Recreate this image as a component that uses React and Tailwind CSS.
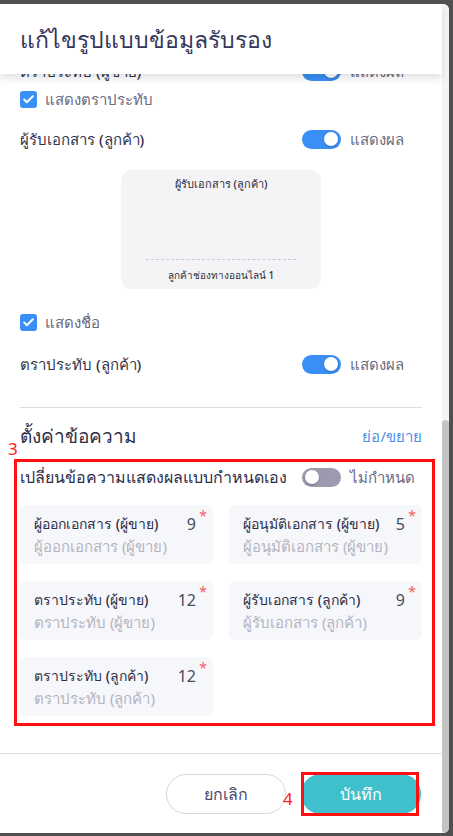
import { Check } from 'lucide-react';

const fontStack = { fontFamily: '"Noto Sans", "DejaVu Sans", sans-serif' };

function Toggle({ on = true, label }) {
  return (
    <div className="flex w-[120px] items-center gap-[9px]">
      <div
        className={`flex h-[19px] w-[39px] items-center rounded-full px-[3px] ${
          on ? 'justify-end bg-[#3a8ff7]' : 'justify-start bg-[#9b9aae]'
        }`}
      >
        <div className="h-[14px] w-[14px] rounded-full bg-white shadow-[0_1px_2px_rgba(0,0,0,0.25)]" />
      </div>
      <span className="text-[15px] leading-none text-[#6a6a82]">{label}</span>
    </div>
  );
}

function CheckRow({ label }) {
  return (
    <div className="flex h-[24px] items-center gap-[8px]">
      <div className="flex h-[17px] w-[17px] items-center justify-center rounded-[3px] bg-[#3a8ff7]">
        <Check className="h-[13px] w-[13px] text-white" strokeWidth={3.5} />
      </div>
      <span className="text-[15px] leading-none text-[#6a6a82]">{label}</span>
    </div>
  );
}

function SettingRow({ label, toggleLabel = 'แสดงผล', on = true, className = '' }) {
  return (
    <div className={`flex h-[24px] items-center justify-between ${className}`}>
      <span className="text-[15px] font-medium leading-none text-[#33334a]">{label}</span>
      <Toggle on={on} label={toggleLabel} />
    </div>
  );
}

function TextCard({ label, count, placeholder }) {
  return (
    <div className="relative h-[59px] rounded-[6px] bg-[#f6f7fb] pl-[14px] pr-[17px] pt-[8px]">
      <div className="flex items-center justify-between">
        <span className="text-[14px] font-medium leading-[22px] text-[#2e2e44]">{label}</span>
        <span className="text-[16px] leading-[22px] text-[#4a4a5e]">{count}</span>
      </div>
      <span className="absolute right-[6px] top-[4px] text-[14px] leading-none text-[#f2605a]">*</span>
      <div className="text-[15px] leading-[22px] text-[#b4b4c0]">{placeholder}</div>
    </div>
  );
}

export default function App() {
  return (
    <div className="h-[836px] w-[453px] overflow-hidden bg-[#505050] pt-[4px]" style={fontStack}>
      <div className="flex h-[829px] w-[449px] overflow-hidden rounded-r-[6px] bg-white">
        <div className="flex w-[442px] flex-col">
          {/* header */}
          <div className="relative z-10 flex h-[70px] shrink-0 items-center bg-white px-[20px] shadow-[0_4px_8px_rgba(0,0,0,0.12)]">
            <h1 className="text-[23px] font-medium leading-none text-[#36365a]">แก้ไขรูปแบบข้อมูลรับรอง</h1>
          </div>

          {/* body */}
          <div className="flex-1 overflow-hidden px-[20px]">
            <SettingRow label="ตราประทับ (ผู้ขาย)" className="-mt-[15px]" />
            <div className="mt-[4px]">
              <CheckRow label="แสดงตราประทับ" />
            </div>
            <SettingRow label="ผู้รับเอกสาร (ลูกค้า)" className="mt-[16px]" />

            <div className="mx-auto mt-[19px] flex h-[119px] w-[200px] flex-col items-center rounded-[10px] bg-[#f4f4f6] px-[25px] pt-[6px]">
              <span className="text-[11px] font-medium leading-[16px] text-[#2e2e3e]">ผู้รับเอกสาร (ลูกค้า)</span>
              <div className="mt-[67px] w-full border-t border-dashed border-[#c9c9d2]" />
              <span className="mt-[8px] text-[10px] font-medium leading-[14px] text-[#2e2e3e]">ลูกค้าช่องทางออนไลน์ 1</span>
            </div>

            <div className="mt-[21px]">
              <CheckRow label="แสดงชื่อ" />
            </div>
            <SettingRow label="ตราประทับ (ลูกค้า)" className="mt-[18px]" />

            <div className="mt-[31px] border-t border-[#dcdce4]" />

            <div className="mt-[14px] flex h-[28px] items-center justify-between">
              <span className="text-[19px] font-medium leading-none text-[#2e2e46]">ตั้งค่าข้อความ</span>
              <span className="text-[15px] leading-none text-[#4c8fe6]">ย่อ/ขยาย</span>
            </div>

            {/* highlighted block */}
            <div className="relative -ml-[6px] -mr-[13px] mt-[9px] border-[3px] border-[#ff1010] pb-[7px] pl-[3px] pr-[10px] pt-[3px]">
              <span className="absolute -left-[9px] -top-[22px] text-[17px] leading-none text-[#ff2020]">3</span>
              <div className="flex h-[24px] items-center justify-between">
                <span className="text-[16px] font-medium leading-none text-[#2e2e46]">เปลี่ยนข้อความแสดงผลแบบกำหนดเอง</span>
                <Toggle on={false} label="ไม่กำหนด" />
              </div>
              <div className="mt-[16px] grid grid-cols-2 gap-x-[16px] gap-y-[17px]">
                <TextCard label="ผู้ออกเอกสาร (ผู้ขาย)" count="9" placeholder="ผู้ออกเอกสาร (ผู้ขาย)" />
                <TextCard label="ผู้อนุมัติเอกสาร (ผู้ขาย)" count="5" placeholder="ผู้อนุมัติเอกสาร (ผู้ขาย)" />
                <TextCard label="ตราประทับ (ผู้ขาย)" count="12" placeholder="ตราประทับ (ผู้ขาย)" />
                <TextCard label="ผู้รับเอกสาร (ลูกค้า)" count="9" placeholder="ผู้รับเอกสาร (ลูกค้า)" />
                <TextCard label="ตราประทับ (ลูกค้า)" count="12" placeholder="ตราประทับ (ลูกค้า)" />
              </div>
            </div>
          </div>

          {/* footer */}
          <div className="flex shrink-0 justify-end gap-[15px] border-t border-[#dcdce4] pb-[19px] pl-[20px] pr-[21px] pt-[20px]">
            <button className="h-[40px] w-[120px] rounded-full border border-[#d6d6e0] bg-white text-[16px] text-[#4a4a6c]">
              ยกเลิก
            </button>
            <div className="relative">
              <span className="absolute -left-[18px] top-[16px] text-[17px] leading-none text-[#ff2020]">4</span>
              <button className="h-[40px] w-[120px] rounded-full bg-[#40c0cc] text-[16px] text-white">บันทึก</button>
              <div className="pointer-events-none absolute -top-[2px] bottom-[-2px] left-0 right-[2px] border-[3px] border-[#ff1010]" />
            </div>
          </div>
        </div>

        {/* scrollbar */}
        <div className="flex w-[7px] flex-col bg-[#f4f4f4]">
          <div className="h-[416px] shrink-0" />
          <div className="flex-1 rounded-full bg-[#c4c4c4]" />
        </div>
      </div>
    </div>
  );
}
